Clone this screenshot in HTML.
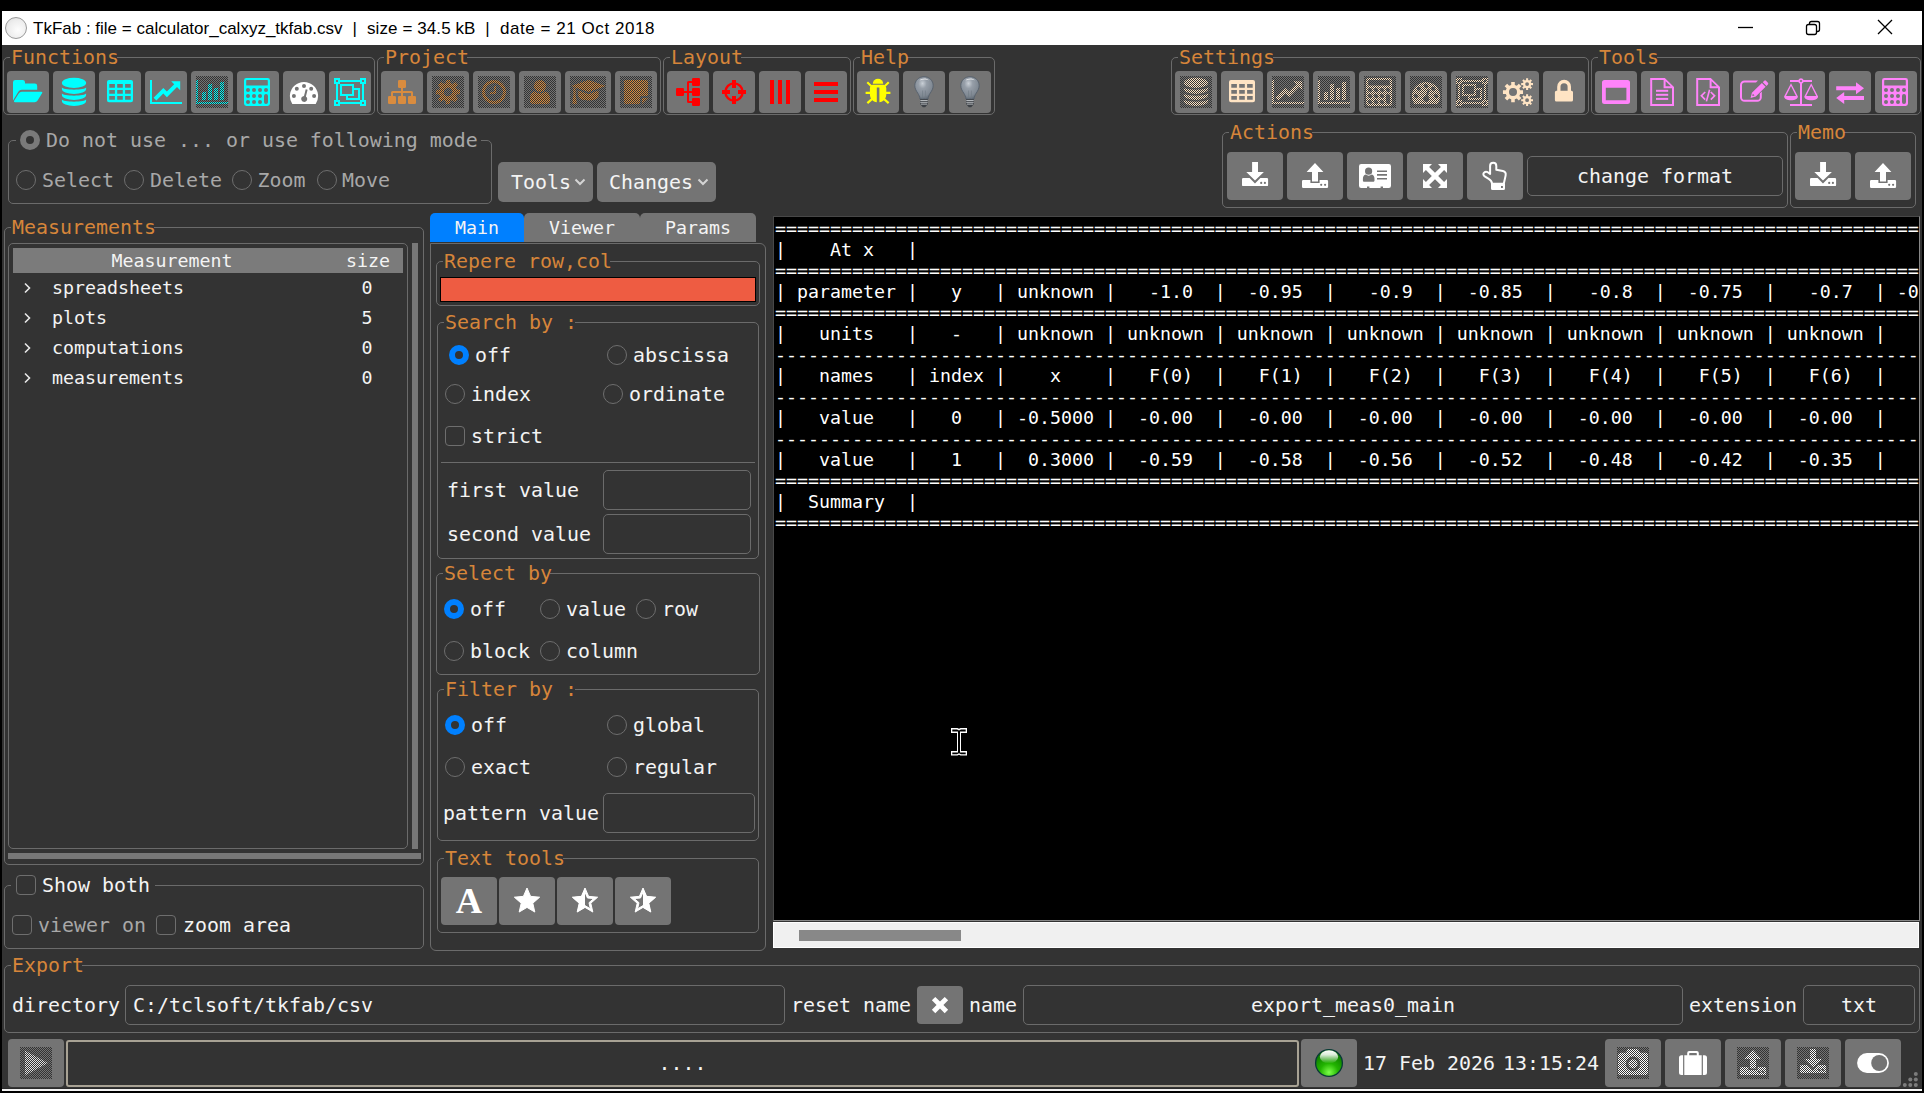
<!DOCTYPE html>
<html><head><meta charset="utf-8"><title>TkFab</title>
<style>
*{box-sizing:content-box;margin:0;padding:0}
html,body{width:1924px;height:1093px;overflow:hidden;background:#000}
body{position:relative;font-family:"DejaVu Sans Mono","Liberation Mono",monospace;color:#f4f4f4}
#win{position:absolute;left:2px;top:45px;width:1920px;height:1043px;background:#333333;border-bottom:1px solid #2a2a2a}
#wl{position:absolute;left:2px;top:1089px;width:1920px;height:2px;background:#f4f4f4}
#tb{position:absolute;left:2px;top:11px;width:1920px;height:34px;background:#fff}
#ticon{position:absolute;left:3px;top:6px;width:20px;height:20px;border-radius:50%;border:1px solid #9a9a9a;background:radial-gradient(circle at 60% 60%,#fdfdfd 0%,#ececec 60%,#d8d8d8 100%)}
.tt{position:absolute;top:0;height:34px;line-height:35px;font-family:"Liberation Sans","DejaVu Sans",sans-serif;font-size:17px;color:#000;white-space:pre}
#wctl{position:absolute;left:1719px;top:-1px}
.fr{position:absolute;border:1px solid #6b6b6b}
.fl{position:absolute;height:22px;line-height:24px;background:#333333;color:#d6853a;font-size:19.93px;white-space:pre;padding-left:1px}
.cover{position:absolute;background:#333333}
.bt{position:absolute;background:#747474;display:flex;align-items:center;justify-content:center}
.bt svg{display:block}
.mb span{position:absolute;top:0;height:40px;line-height:42px;font-size:19.93px}
.mb svg{position:absolute}
.mb{border-radius:5px}
.tx{position:absolute;height:30px;line-height:30px;white-space:pre}
.t20{font-size:19.93px}
.t18{font-size:18.27px}
.rd{position:absolute;width:18px;height:18px;border:1px solid #6e6e6e;border-radius:50%;background:#333333}
.rd.on{width:8px;height:8px;border:6px solid #0080ff;background:#333333}
.rd.ond{width:8px;height:8px;border:6px solid #7a7a7a;background:#333333}
.ck{position:absolute;width:18px;height:18px;border:1px solid #6e6e6e;border-radius:4px;background:#333333}
.en{position:absolute;border:1px solid #6b6b6b;border-radius:5px;font-size:19.93px;white-space:pre;color:#f4f4f4}
.en.pl{padding-left:7px}
.sep{position:absolute;height:1px;background:#6b6b6b}
.sb{position:absolute;background:#777}
.abs{position:absolute}
#thead{position:absolute;background:#7b7b7b}
.tab{position:absolute;background:#747474;border-radius:5px 5px 0 0;text-align:center;line-height:30px;font-size:18.27px;color:#f4f4f4}
.tab.on{background:#0080ff}
#red{position:absolute;background:#ee5c42;border:1px solid #000}
#ta{position:absolute;left:773px;top:216px;width:1145px;height:703px;background:#000;border:1px solid #484848;border-right-color:#888;border-bottom-color:#888;overflow:hidden;box-sizing:content-box}
#ta pre{position:absolute;left:1px;top:0.5px;font-family:inherit;font-size:18.27px;line-height:21px;color:#fff;margin:0}
#hs{position:absolute;left:773px;top:922px;width:1144px;height:24px;background:#f0f0f0;border:1px solid #fff}
#hth{position:absolute;left:25px;top:7px;width:162px;height:11px;background:#888}
#st{position:absolute;border:2px solid #a8a294;border-radius:3px;text-align:center;line-height:43px;font-size:19.93px}
</style></head>
<body>
<svg width="0" height="0" style="position:absolute"><defs><pattern id="stp" width="2" height="2" patternUnits="userSpaceOnUse"><rect x="0" y="0" width="1" height="1" fill="#333333"/><rect x="1" y="1" width="1" height="1" fill="#333333"/></pattern></defs></svg>
<div id="win"></div><div id="wl"></div>
<div id="tb"><div id="ticon"></div><div class="tt" style="left:31px">TkFab : file = calculator_calxyz_tkfab.csv</div><div class="tt" style="left:350.500px">|</div><div class="tt" style="left:365px;letter-spacing:0.09px">size = 34.5 kB</div><div class="tt" style="left:483.300px">|</div><div class="tt" style="left:498px;letter-spacing:0.55px">date = 21 Oct 2018</div><svg id="wctl" width="190" height="34" viewBox="0 0 190 34" fill="none" stroke="#000" stroke-width="1.3"><path d="M17 17.5h15"/><rect x="85.5" y="14.5" width="10" height="10" rx="2"/><path d="M88.5 14.5v-1a2 2 0 0 1 2-2h6a2 2 0 0 1 2 2v6a2 2 0 0 1-2 2h-1"/><path d="M157 10l14 14M171 10l-14 14"/></svg></div>
<div class="fr " style="left:3px;top:57px;width:370px;height:56px;border-radius:5px"></div>
<div class="fl" style="left:10px;top:46px;width:106px">Functions</div>
<div class="bt" style="left:7px;top:71px;width:42px;height:42px;border-radius:4px"><svg width="32" height="32" viewBox="0 0 32 32" fill="#00ffff" stroke="none" style="color:#00ffff"><path d="M1 6.3a2.4 2.4 0 0 1 2.4-2.4h7.2a2.4 2.4 0 0 1 2.4 2.4v1.3h9.8a2.4 2.4 0 0 1 2.4 2.4v3.7H9.6a3.6 3.6 0 0 0-3.1 1.8L1 24.5z"/><path d="M9.8 15.7h19.6a.9.9 0 0 1 .8 1.4l-4.6 7.4a3.6 3.6 0 0 1-3 1.7H2.9a.9.9 0 0 1-.8-1.4l4.6-7.4a3.6 3.6 0 0 1 3.1-1.7z"/></svg></div>
<div class="bt" style="left:53px;top:71px;width:42px;height:42px;border-radius:4px"><svg width="32" height="32" viewBox="0 0 32 32" fill="#00ffff" stroke="none" style="color:#00ffff"><ellipse cx="16" cy="6.9" rx="12.1" ry="5.1"/><path d="M3.900 11.300C3.900 14.500 28.100 14.500 28.100 11.300V13A12.100 5.100 0 0 1 3.900 13z"/><path d="M3.900 17.300C3.900 20.500 28.100 20.500 28.100 17.300V19A12.100 5.100 0 0 1 3.900 19z"/><path d="M3.900 23.300C3.900 26.500 28.100 26.500 28.100 23.300V25A12.100 5.100 0 0 1 3.900 25z"/></svg></div>
<div class="bt" style="left:99px;top:71px;width:42px;height:42px;border-radius:4px"><svg width="32" height="32" viewBox="0 0 32 32" fill="#00ffff" stroke="none" style="color:#00ffff"><path fill-rule="evenodd" d="M5 4h22a2 2 0 0 1 2 2v18.200a2 2 0 0 1-2 2H5a2 2 0 0 1-2-2V6a2 2 0 0 1 2-2zM5.3 8.1h5.6v3.6h-5.600zM5.3 14.1h5.6v3.6h-5.600zM5.3 20.1h5.6v3.6h-5.600zM13.2 8.1h5.6v3.6h-5.600zM13.2 14.1h5.6v3.6h-5.600zM13.2 20.1h5.6v3.6h-5.600zM21.1 8.1h5.6v3.6h-5.600zM21.1 14.1h5.6v3.6h-5.600zM21.1 20.1h5.6v3.6h-5.600z"/></svg></div>
<div class="bt" style="left:145px;top:71px;width:42px;height:42px;border-radius:4px"><svg width="32" height="32" viewBox="0 0 32 32" fill="#00ffff" stroke="none" style="color:#00ffff"><path d="M0 4h2v22h30v2H0z"/><path d="M3.600 21.700L13.300 12l3.600 3.600 7.300-7.300-3-3h9v9l-3.200-3.200-10.100 10.100-3.600-3.600-6.900 6.900z"/></svg></div>
<div class="bt" style="left:191px;top:71px;width:42px;height:42px;border-radius:4px"><svg width="32" height="32" viewBox="0 0 32 32" fill="#00ffff" stroke="none" style="color:#00ffff"><path d="M0 4h2v22h30v2H0z"/><rect x="6" y="16" width="4" height="8"/><rect x="12" y="8" width="4" height="16"/><rect x="18" y="12" width="4" height="12"/><rect x="24" y="6" width="4" height="18"/><rect x="0" y="0" width="32" height="32" fill="url(#stp)" shape-rendering="crispEdges"/></svg></div>
<div class="bt" style="left:237px;top:71px;width:42px;height:42px;border-radius:4px"><svg width="32" height="32" viewBox="0 0 32 32" fill="#00ffff" stroke="none" style="color:#00ffff"><path fill-rule="evenodd" d="M4.400 2h21.200a2.400 2.400 0 0 1 2.400 2.400v23.200a2.400 2.400 0 0 1-2.400 2.400H4.400a2.400 2.400 0 0 1-2.400-2.400V4.400a2.400 2.400 0 0 1 2.400-2.400zM4.800 4.100h20.400a.6.6 0 0 1 .6.600v4.300a.6.6 0 0 1-.6.600H4.800a.6.6 0 0 1-.6-.6V4.700a.6.600 0 0 1 .6-.6zM8 14a2 2 0 1 0 -4 0a2 2 0 1 0 4 0zM8 20a2 2 0 1 0 -4 0a2 2 0 1 0 4 0zM8 26a2 2 0 1 0 -4 0a2 2 0 1 0 4 0zM14 14a2 2 0 1 0 -4 0a2 2 0 1 0 4 0zM14 20a2 2 0 1 0 -4 0a2 2 0 1 0 4 0zM14 26a2 2 0 1 0 -4 0a2 2 0 1 0 4 0zM20 14a2 2 0 1 0 -4 0a2 2 0 1 0 4 0zM20 20a2 2 0 1 0 -4 0a2 2 0 1 0 4 0zM20 26a2 2 0 1 0 -4 0a2 2 0 1 0 4 0zM26 14a2 2 0 1 0 -4 0a2 2 0 1 0 4 0zM24 18a2 2 0 0 1 2 2v6a2 2 0 0 1-4 0v-6a2 2 0 0 1 2-2z"/></svg></div>
<div class="bt" style="left:283px;top:71px;width:42px;height:42px;border-radius:4px"><svg width="32" height="32" viewBox="0 0 32 32" fill="#ffffff" stroke="none" style="color:#ffffff"><path fill-rule="evenodd" d="M4.300 28a14.100 14.100 0 1 1 23.400 0zM18 9.9a2 2 0 1 0 -4 0a2 2 0 1 0 4 0zM10.8 12.8a2 2 0 1 0 -4 0a2 2 0 1 0 4 0zM25.2 12.8a2 2 0 1 0 -4 0a2 2 0 1 0 4 0zM7.9 20.1a2 2 0 1 0 -4 0a2 2 0 1 0 4 0zM28.1 20.1a2 2 0 1 0 -4 0a2 2 0 1 0 4 0zM17.700 13.300l1.900.5-1.700 6.600a3 3 0 1 1-1.900-.5z"/></svg></div>
<div class="bt" style="left:329px;top:71px;width:42px;height:42px;border-radius:4px"><svg width="32" height="32" viewBox="0 0 32 32" fill="#00ffff" stroke="none" style="color:#00ffff"><path fill-rule="evenodd" d="M0 2h6v2h20v-2h6v6h-2v16h2v6h-6v-2H6v2H0v-6h2V8H0zM2 4v2h2V4zM28 4v2h2V4zM2 26v2h2v-2zM28 26v2h2v-2zM6 6v2H4v16h2v2h20v-2h2V8h-2V6zM6 8h14v4h6v12H12v-4H6zM8 10v8h10v-8zM20 14v6h-6v2h10v-8z"/></svg></div>
<div class="fr " style="left:377px;top:57px;width:282px;height:56px;border-radius:5px"></div>
<div class="fl" style="left:384px;top:46px;width:82px">Project</div>
<div class="bt" style="left:381px;top:71px;width:42px;height:42px;border-radius:4px"><svg width="32" height="32" viewBox="0 0 32 32" fill="#d98c3f" stroke="none" style="color:#d98c3f"><rect x="12" y="4" width="8" height="8" rx="1.200"/><rect x="2" y="20" width="8" height="8" rx="1.200"/><rect x="12" y="20" width="8" height="8" rx="1.200"/><rect x="22" y="20" width="8" height="8" rx="1.200"/><path d="M15 11h2v4h8.500a1.500 1.500 0 0 1 1.500 1.500V21h-2v-4h-8v4h-2v-4H7v4H5v-4.500A1.500 1.500 0 0 1 6.500 15H15z"/></svg></div>
<div class="bt" style="left:427px;top:71px;width:42px;height:42px;border-radius:4px"><svg width="32" height="32" viewBox="0 0 32 32" fill="#d98c3f" stroke="none" style="color:#d98c3f"><path fill-rule="evenodd" d="M24.93 13.78 L28.01 13.86 L28.01 18.14 L24.93 18.22 L23.88 20.75 L26.01 22.98 L22.98 26.01 L20.75 23.88 L18.22 24.93 L18.14 28.01 L13.86 28.01 L13.78 24.93 L11.25 23.88 L9.02 26.01 L5.99 22.98 L8.12 20.75 L7.07 18.22 L3.99 18.14 L3.99 13.86 L7.07 13.78 L8.12 11.25 L5.99 9.02 L9.02 5.99 L11.25 8.12 L13.78 7.07 L13.86 3.99 L18.14 3.99 L18.22 7.07 L20.75 8.12 L22.98 5.99 L26.01 9.02 L23.88 11.25Z M20.20 16.00 A4.2 4.2 0 1 0 11.80 16.00 A4.2 4.2 0 1 0 20.20 16.00Z"/><rect x="0" y="0" width="32" height="32" fill="url(#stp)" shape-rendering="crispEdges"/></svg></div>
<div class="bt" style="left:473px;top:71px;width:42px;height:42px;border-radius:4px"><svg width="32" height="32" viewBox="0 0 32 32" fill="#d98c3f" stroke="none" style="color:#d98c3f"><path fill-rule="evenodd" d="M16 4a12 12 0 1 1 0 24a12 12 0 1 1 0-24zM16 7a9 9 0 1 0 0 18a9 9 0 1 0 0-18z"/><path d="M16 10h2v8h-6v-2h4z"/><rect x="0" y="0" width="32" height="32" fill="url(#stp)" shape-rendering="crispEdges"/></svg></div>
<div class="bt" style="left:519px;top:71px;width:42px;height:42px;border-radius:4px"><svg width="32" height="32" viewBox="0 0 32 32" fill="#d98c3f" stroke="none" style="color:#d98c3f"><circle cx="16" cy="10" r="6.100"/><path d="M11 15.400c1.400 1.200 3.100 1.800 5 1.800s3.600-.600 5-1.800c3 .4 5 3 5 7.600v2c0 1.800-1.400 3-3.400 3H9.400C7.400 28 6 26.800 6 25v-2c0-4.600 2-7.200 5-7.600z"/><rect x="0" y="0" width="32" height="32" fill="url(#stp)" shape-rendering="crispEdges"/></svg></div>
<div class="bt" style="left:565px;top:71px;width:46px;height:42px;border-radius:4px"><svg width="36" height="32" viewBox="0 0 36 32" fill="#d98c3f" stroke="none" style="color:#d98c3f"><path d="M18.500 3.900L35.800 10 18.500 16.100 1 10z"/><path d="M8.300 14.400l10.200 3.600 10-3.600v5.800c0 2.400-4.400 4.200-10 4.200s-10.200-1.800-10.200-4.200z"/><path d="M3.400 11.200l2.200.8v6.500l1.200 8.500c0 .6-.6 1-1.400 1H3.700c-.8 0-1.400-.4-1.300-1l1-8.500z"/><rect x="0" y="0" width="36" height="32" fill="url(#stp)" shape-rendering="crispEdges"/></svg></div>
<div class="bt" style="left:615px;top:71px;width:42px;height:42px;border-radius:4px"><svg width="32" height="32" viewBox="0 0 32 32" fill="#d98c3f" stroke="none" style="color:#d98c3f"><path d="M5.500 4h21A1.500 1.500 0 0 1 28 5.500V20h-6.500A1.500 1.500 0 0 0 20 21.500V28H5.500A1.500 1.500 0 0 1 4 26.500v-21A1.500 1.500 0 0 1 5.500 4z"/><path d="M22 22h6l-6 6z"/><rect x="0" y="0" width="32" height="32" fill="url(#stp)" shape-rendering="crispEdges"/></svg></div>
<div class="fr " style="left:663px;top:57px;width:186px;height:56px;border-radius:5px"></div>
<div class="fl" style="left:670px;top:46px;width:70px">Layout</div>
<div class="bt" style="left:667px;top:71px;width:42px;height:42px;border-radius:4px"><svg width="32" height="32" viewBox="0 0 32 32" fill="#ff0000" stroke="none" style="color:#ff0000"><rect x="4" y="12" width="8" height="8" rx="1.200"/><rect x="20" y="2" width="8" height="8" rx="1.200"/><rect x="20" y="12" width="8" height="8" rx="1.200"/><rect x="20" y="22" width="8" height="8" rx="1.200"/><path d="M11 15h4V6.500A1.500 1.500 0 0 1 16.500 5H21v2h-4v8h4v2h-4v8h4v2h-4.500A1.500 1.500 0 0 1 15 25.500V17h-4z"/></svg></div>
<div class="bt" style="left:713px;top:71px;width:42px;height:42px;border-radius:4px"><svg width="32" height="32" viewBox="0 0 32 32" fill="#ff0000" stroke="none" style="color:#ff0000"><path fill-rule="evenodd" d="M16 6.200a9.800 9.800 0 1 1 0 19.600a9.800 9.800 0 1 1 0-19.600zM16 8.600a7.400 7.400 0 1 0 0 14.800a7.400 7.400 0 1 0 0-14.800z"/><rect x="14" y="4" width="4" height="8"/><rect x="14" y="20" width="4" height="8"/><rect x="4" y="14" width="8" height="4"/><rect x="20" y="14" width="8" height="4"/></svg></div>
<div class="bt" style="left:759px;top:71px;width:42px;height:42px;border-radius:4px"><svg width="32" height="32" viewBox="0 0 32 32" fill="#ff0000" stroke="none" style="color:#ff0000"><rect x="6" y="4" width="4" height="24"/><rect x="14" y="4" width="4" height="24"/><rect x="22" y="4" width="4" height="24"/></svg></div>
<div class="bt" style="left:805px;top:71px;width:42px;height:42px;border-radius:4px"><svg width="32" height="32" viewBox="0 0 32 32" fill="#ff0000" stroke="none" style="color:#ff0000"><rect x="4" y="6" width="24" height="4"/><rect x="4" y="14" width="24" height="4"/><rect x="4" y="22" width="24" height="4"/></svg></div>
<div class="fr " style="left:853px;top:57px;width:140px;height:56px;border-radius:5px"></div>
<div class="fl" style="left:860px;top:46px;width:46px">Help</div>
<div class="bt" style="left:857px;top:71px;width:42px;height:42px;border-radius:4px"><svg width="32" height="32" viewBox="0 0 32 32" fill="#ffff00" stroke="none" style="color:#ffff00"><path d="M10.800 7.700a5.200 4.900 0 0 1 10.400 0z"/><path d="M10.600 8.700h10.800c1.600.6 2.900 1.900 2.900 3.600v5.900c0 4.500-3 7.700-6.900 8.100V11.600h-2.600v14.700c-3.900-.4-6.900-3.600-6.900-8.100v-5.900c0-1.700 1.200-3 2.700-3.600z"/><path d="M9.300 11.600L4.500 6.900l1.500-1.500 4.800 4.800zM22.700 11.600l4.800-4.700-1.500-1.500-4.800 4.800zM8.700 15.700H3.600v2.400h5.100zM23.300 15.700h5.100v2.400h-5.100zM9.800 21.800l-5.200 4.500 1.500 1.600 5.300-4.600zM22.200 21.800l5.200 4.500-1.500 1.600-5.300-4.600z"/></svg></div>
<div class="bt" style="left:903px;top:71px;width:42px;height:42px;border-radius:4px"><svg width="32" height="32" viewBox="0 0 32 32" fill="#ffff00" stroke="none" style="color:#ffff00"><defs><radialGradient id="bg1" cx="0.42" cy="0.3" r="0.75"><stop offset="0" stop-color="#c9cfd6"/><stop offset="0.3" stop-color="#969ea8"/><stop offset="0.75" stop-color="#7f8892"/><stop offset="1" stop-color="#59636e"/></radialGradient></defs><path d="M16 .7c5.200 0 9.200 3.900 9.200 8.900 0 3.200-1.600 5.400-3 7.600-1 1.600-2 3.600-2.200 6h-8c-.2-2.400-1.200-4.400-2.200-6-1.400-2.200-3-4.400-3-7.600C6.800 4.600 10.800 .7 16 .7z" fill="url(#bg1)" stroke="#56606c" stroke-width=".9"/><path d="M11.500 4.500c2-2.200 6.500-2.800 9.500-.3-3-1-6.500-.8-9.500.3z" fill="#fff" opacity=".75"/><path d="M12.100 23.200h7.800v5l-1.700 1.700-1 1.300h-2.400l-1-1.300-1.700-1.700z" fill="#3c4046"/><path d="M12.300 24.500h7.400M12.300 26.300h7.400M12.800 28.100h6.400" stroke="#d0d4d8" stroke-width=".8" fill="none"/><path d="M14.600 22.500V14.500M17.400 22.500V14.500" stroke="#6f7883" stroke-width=".6" fill="none"/></svg></div>
<div class="bt" style="left:949px;top:71px;width:42px;height:42px;border-radius:4px"><svg width="32" height="32" viewBox="0 0 32 32" fill="#ffff00" stroke="none" style="color:#ffff00"><defs><radialGradient id="bg1" cx="0.42" cy="0.3" r="0.75"><stop offset="0" stop-color="#c9cfd6"/><stop offset="0.3" stop-color="#969ea8"/><stop offset="0.75" stop-color="#7f8892"/><stop offset="1" stop-color="#59636e"/></radialGradient></defs><path d="M16 .7c5.200 0 9.200 3.900 9.200 8.900 0 3.200-1.600 5.400-3 7.600-1 1.600-2 3.600-2.200 6h-8c-.2-2.400-1.200-4.400-2.200-6-1.400-2.200-3-4.400-3-7.600C6.800 4.600 10.800 .7 16 .7z" fill="url(#bg1)" stroke="#56606c" stroke-width=".9"/><path d="M11.500 4.500c2-2.200 6.500-2.800 9.500-.3-3-1-6.500-.8-9.500.3z" fill="#fff" opacity=".75"/><path d="M12.100 23.200h7.800v5l-1.700 1.700-1 1.300h-2.400l-1-1.300-1.700-1.700z" fill="#3c4046"/><path d="M12.300 24.500h7.400M12.300 26.300h7.400M12.800 28.100h6.400" stroke="#d0d4d8" stroke-width=".8" fill="none"/><path d="M14.600 22.500V14.500M17.400 22.500V14.500" stroke="#6f7883" stroke-width=".6" fill="none"/></svg></div>
<div class="fr " style="left:1171px;top:57px;width:416px;height:56px;border-radius:5px"></div>
<div class="fl" style="left:1178px;top:46px;width:94px">Settings</div>
<div class="bt" style="left:1175px;top:71px;width:42px;height:42px;border-radius:4px"><svg width="32" height="32" viewBox="0 0 32 32" fill="#ffe4c4" stroke="none" style="color:#ffe4c4"><ellipse cx="16" cy="6.9" rx="12.1" ry="5.1"/><path d="M3.900 11.300C3.900 14.500 28.100 14.500 28.100 11.300V13A12.100 5.100 0 0 1 3.900 13z"/><path d="M3.900 17.300C3.900 20.500 28.100 20.500 28.100 17.300V19A12.100 5.100 0 0 1 3.900 19z"/><path d="M3.900 23.300C3.900 26.500 28.100 26.500 28.100 23.300V25A12.100 5.100 0 0 1 3.900 25z"/><rect x="0" y="0" width="32" height="32" fill="url(#stp)" shape-rendering="crispEdges"/></svg></div>
<div class="bt" style="left:1221px;top:71px;width:42px;height:42px;border-radius:4px"><svg width="32" height="32" viewBox="0 0 32 32" fill="#ffe4c4" stroke="none" style="color:#ffe4c4"><path fill-rule="evenodd" d="M5 4h22a2 2 0 0 1 2 2v18.200a2 2 0 0 1-2 2H5a2 2 0 0 1-2-2V6a2 2 0 0 1 2-2zM5.3 8.1h5.6v3.6h-5.600zM5.3 14.1h5.6v3.6h-5.600zM5.3 20.1h5.6v3.6h-5.600zM13.2 8.1h5.6v3.6h-5.600zM13.2 14.1h5.6v3.6h-5.600zM13.2 20.1h5.6v3.6h-5.600zM21.1 8.1h5.6v3.6h-5.600zM21.1 14.1h5.6v3.6h-5.600zM21.1 20.1h5.6v3.6h-5.600z"/></svg></div>
<div class="bt" style="left:1267px;top:71px;width:42px;height:42px;border-radius:4px"><svg width="32" height="32" viewBox="0 0 32 32" fill="#ffe4c4" stroke="none" style="color:#ffe4c4"><path d="M0 4h2v22h30v2H0z"/><path d="M3.600 21.700L13.300 12l3.600 3.600 7.300-7.300-3-3h9v9l-3.200-3.200-10.100 10.100-3.600-3.600-6.900 6.900z"/><rect x="0" y="0" width="32" height="32" fill="url(#stp)" shape-rendering="crispEdges"/></svg></div>
<div class="bt" style="left:1313px;top:71px;width:42px;height:42px;border-radius:4px"><svg width="32" height="32" viewBox="0 0 32 32" fill="#ffe4c4" stroke="none" style="color:#ffe4c4"><path d="M0 4h2v22h30v2H0z"/><rect x="6" y="16" width="4" height="8"/><rect x="12" y="8" width="4" height="16"/><rect x="18" y="12" width="4" height="12"/><rect x="24" y="6" width="4" height="18"/><rect x="0" y="0" width="32" height="32" fill="url(#stp)" shape-rendering="crispEdges"/></svg></div>
<div class="bt" style="left:1359px;top:71px;width:42px;height:42px;border-radius:4px"><svg width="32" height="32" viewBox="0 0 32 32" fill="#ffe4c4" stroke="none" style="color:#ffe4c4"><path fill-rule="evenodd" d="M4.400 2h21.200a2.400 2.400 0 0 1 2.400 2.400v23.200a2.400 2.400 0 0 1-2.400 2.400H4.400a2.400 2.400 0 0 1-2.400-2.400V4.400a2.400 2.400 0 0 1 2.400-2.400zM4.800 4.100h20.400a.6.6 0 0 1 .6.600v4.300a.6.6 0 0 1-.6.600H4.800a.6.6 0 0 1-.6-.6V4.700a.6.600 0 0 1 .6-.6zM8 14a2 2 0 1 0 -4 0a2 2 0 1 0 4 0zM8 20a2 2 0 1 0 -4 0a2 2 0 1 0 4 0zM8 26a2 2 0 1 0 -4 0a2 2 0 1 0 4 0zM14 14a2 2 0 1 0 -4 0a2 2 0 1 0 4 0zM14 20a2 2 0 1 0 -4 0a2 2 0 1 0 4 0zM14 26a2 2 0 1 0 -4 0a2 2 0 1 0 4 0zM20 14a2 2 0 1 0 -4 0a2 2 0 1 0 4 0zM20 20a2 2 0 1 0 -4 0a2 2 0 1 0 4 0zM20 26a2 2 0 1 0 -4 0a2 2 0 1 0 4 0zM26 14a2 2 0 1 0 -4 0a2 2 0 1 0 4 0zM24 18a2 2 0 0 1 2 2v6a2 2 0 0 1-4 0v-6a2 2 0 0 1 2-2z"/><rect x="0" y="0" width="32" height="32" fill="url(#stp)" shape-rendering="crispEdges"/></svg></div>
<div class="bt" style="left:1405px;top:71px;width:42px;height:42px;border-radius:4px"><svg width="32" height="32" viewBox="0 0 32 32" fill="#ffe4c4" stroke="none" style="color:#ffe4c4"><path fill-rule="evenodd" d="M4.300 28a14.100 14.100 0 1 1 23.400 0zM18 9.9a2 2 0 1 0 -4 0a2 2 0 1 0 4 0zM10.8 12.8a2 2 0 1 0 -4 0a2 2 0 1 0 4 0zM25.2 12.8a2 2 0 1 0 -4 0a2 2 0 1 0 4 0zM7.9 20.1a2 2 0 1 0 -4 0a2 2 0 1 0 4 0zM28.1 20.1a2 2 0 1 0 -4 0a2 2 0 1 0 4 0zM17.700 13.300l1.900.5-1.700 6.600a3 3 0 1 1-1.900-.5z"/><rect x="0" y="0" width="32" height="32" fill="url(#stp)" shape-rendering="crispEdges"/></svg></div>
<div class="bt" style="left:1451px;top:71px;width:42px;height:42px;border-radius:4px"><svg width="32" height="32" viewBox="0 0 32 32" fill="#ffe4c4" stroke="none" style="color:#ffe4c4"><path fill-rule="evenodd" d="M0 2h6v2h20v-2h6v6h-2v16h2v6h-6v-2H6v2H0v-6h2V8H0zM2 4v2h2V4zM28 4v2h2V4zM2 26v2h2v-2zM28 26v2h2v-2zM6 6v2H4v16h2v2h20v-2h2V8h-2V6zM6 8h14v4h6v12H12v-4H6zM8 10v8h10v-8zM20 14v6h-6v2h10v-8z"/><rect x="0" y="0" width="32" height="32" fill="url(#stp)" shape-rendering="crispEdges"/></svg></div>
<div class="bt" style="left:1497px;top:71px;width:42px;height:42px;border-radius:4px"><svg width="32" height="32" viewBox="0 0 32 32" fill="#ffe4c4" stroke="none" style="color:#ffe4c4"><path fill-rule="evenodd" d="M18.18 14.32 L21.04 14.31 L21.04 17.89 L18.18 17.88 L17.34 19.92 L19.37 21.93 L16.83 24.47 L14.82 22.44 L12.78 23.28 L12.79 26.14 L9.21 26.14 L9.22 23.28 L7.18 22.44 L5.17 24.47 L2.63 21.93 L4.66 19.92 L3.82 17.88 L0.96 17.89 L0.96 14.31 L3.82 14.32 L4.66 12.28 L2.63 10.27 L5.17 7.73 L7.18 9.76 L9.22 8.92 L9.21 6.06 L12.79 6.06 L12.78 8.92 L14.82 9.76 L16.83 7.73 L19.37 10.27 L17.34 12.28Z M15.00 16.10 A4 4 0 1 0 7.00 16.10 A4 4 0 1 0 15.00 16.10Z"/><path fill-rule="evenodd" d="M29.18 7.09 L31.01 7.05 L31.01 9.15 L29.18 9.11 L28.70 10.27 L30.02 11.53 L28.53 13.02 L27.27 11.70 L26.11 12.18 L26.15 14.01 L24.05 14.01 L24.09 12.18 L22.93 11.70 L21.67 13.02 L20.18 11.53 L21.50 10.27 L21.02 9.11 L19.19 9.15 L19.19 7.05 L21.02 7.09 L21.50 5.93 L20.18 4.67 L21.67 3.18 L22.93 4.50 L24.09 4.02 L24.05 2.19 L26.15 2.19 L26.11 4.02 L27.27 4.50 L28.53 3.18 L30.02 4.67 L28.70 5.93Z M27.00 8.10 A1.9 1.9 0 1 0 23.20 8.10 A1.9 1.9 0 1 0 27.00 8.10Z"/><path fill-rule="evenodd" d="M29.18 23.19 L31.01 23.15 L31.01 25.25 L29.18 25.21 L28.70 26.37 L30.02 27.63 L28.53 29.12 L27.27 27.80 L26.11 28.28 L26.15 30.11 L24.05 30.11 L24.09 28.28 L22.93 27.80 L21.67 29.12 L20.18 27.63 L21.50 26.37 L21.02 25.21 L19.19 25.25 L19.19 23.15 L21.02 23.19 L21.50 22.03 L20.18 20.77 L21.67 19.28 L22.93 20.60 L24.09 20.12 L24.05 18.29 L26.15 18.29 L26.11 20.12 L27.27 20.60 L28.53 19.28 L30.02 20.77 L28.70 22.03Z M27.00 24.20 A1.9 1.9 0 1 0 23.20 24.20 A1.9 1.9 0 1 0 27.00 24.20Z"/></svg></div>
<div class="bt" style="left:1543px;top:71px;width:42px;height:42px;border-radius:4px"><svg width="32" height="32" viewBox="0 0 32 32" fill="#ffe4c4" stroke="none" style="color:#ffe4c4"><path fill-rule="evenodd" d="M9.200 14.800V10.700a6.900 6.900 0 0 1 13.800 0v4.100h.5a1.500 1.500 0 0 1 1.500 1.500V24a1.500 1.500 0 0 1-1.500 1.500H8.400A1.500 1.500 0 0 1 6.900 24v-7.700a1.500 1.500 0 0 1 1.500-1.500zM12.500 14.800h7.100v-4.100a3.550 3.550 0 0 0-7.100 0z"/></svg></div>
<div class="fr " style="left:1591px;top:57px;width:328px;height:56px;border-radius:5px"></div>
<div class="fl" style="left:1598px;top:46px;width:58px">Tools</div>
<div class="bt" style="left:1595px;top:71px;width:42px;height:42px;border-radius:4px"><svg width="32" height="32" viewBox="0 0 32 32" fill="#ff83fa" stroke="none" style="color:#ff83fa"><path fill-rule="evenodd" d="M4.500 4h23A2.500 2.500 0 0 1 30 6.500v19a2.500 2.500 0 0 1-2.500 2.500h-23A2.500 2.500 0 0 1 2 25.500v-19A2.500 2.500 0 0 1 4.500 4zM5.800 11.800v12.400h20.600V11.800z"/></svg></div>
<div class="bt" style="left:1641px;top:71px;width:42px;height:42px;border-radius:4px"><svg width="32" height="32" viewBox="0 0 32 32" fill="#ff83fa" stroke="none" style="color:#ff83fa"><path fill-rule="evenodd" d="M4.200 2h14.600L28 11v19H4.200zM6.200 4v24H26V12.200h-8.400V4zM19.600 5.200v5h5.200z"/><rect x="10" y="13.800" width="12.200" height="2"/><rect x="10" y="17.800" width="12.200" height="2"/><rect x="10" y="21.900" width="12.200" height="2"/></svg></div>
<div class="bt" style="left:1687px;top:71px;width:42px;height:42px;border-radius:4px"><svg width="32" height="32" viewBox="0 0 32 32" fill="#ff83fa" stroke="none" style="color:#ff83fa"><path fill-rule="evenodd" d="M4.200 2h14.600L28 11v19H4.200zM6.200 4v24H26V12.200h-8.400V4zM19.600 5.200v5h5.200z"/><path d="M12.600 15.400l1.200 1.200-3.200 3.200 3.200 3.200-1.200 1.200-4.400-4.400zM19.400 15.400l-1.200 1.200 3.200 3.200-3.200 3.200 1.200 1.200 4.400-4.400zM16.800 13.600l1.600.4-3.200 11.600-1.600-.4z"/></svg></div>
<div class="bt" style="left:1733px;top:71px;width:42px;height:42px;border-radius:4px"><svg width="32" height="32" viewBox="0 0 32 32" fill="#ff83fa" stroke="none" style="color:#ff83fa"><path d="M6.600 4.400H20l-2 2H6.600A2.600 2.600 0 0 0 4 9v12.200a2.600 2.600 0 0 0 2.600 2.600h12.600a2.600 2.600 0 0 0 2.600-2.600v-3.600l2-2v5.600a4.600 4.600 0 0 1-4.600 4.600H6.600A4.600 4.600 0 0 1 2 21.200V9a4.600 4.600 0 0 1 4.600-4.600z"/><path d="M24.800 6.200l1.400-1.400a1.300 1.300 0 0 1 1.800 0l1.900 1.900a1.300 1.300 0 0 1 0 1.800l-1.400 1.400zM23.900 7.100l3.700 3.700-9.800 9.800-5.200 1.300 1.300-5.200zM14.800 17.800l-.5 2.200 2.200-.5z" fill-rule="evenodd"/></svg></div>
<div class="bt" style="left:1779px;top:71px;width:46px;height:42px;border-radius:4px"><svg width="36" height="32" viewBox="0 0 36 32" fill="#ff83fa" stroke="none" style="color:#ff83fa"><path fill-rule="evenodd" d="M17 2.200a2.800 2.800 0 0 1 2.600 1.800H28v2h-8.400a2.800 2.800 0 0 1-1.600 1.600V28h10v2H6v-2h10V7.600A2.800 2.800 0 0 1 14.400 6H6V4h8.400A2.800 2.800 0 0 1 17 2.200zM17 4a1 1 0 1 0 0 2a1 1 0 1 0 0-2z"/><path fill-rule="evenodd" d="M7 7.200l6.900 13.200c0 2.200-3 3.800-6.900 3.800S.1 22.600.1 20.400zM7 10L2 20h10zM27.200 7.200l6.900 13.200c0 2.200-3 3.800-6.900 3.800s-6.900-1.600-6.900-3.800zM27.200 10l-5 10h10z"/></svg></div>
<div class="bt" style="left:1829px;top:71px;width:42px;height:42px;border-radius:4px"><svg width="32" height="32" viewBox="0 0 32 32" fill="#ff83fa" stroke="none" style="color:#ff83fa"><path d="M2.200 10.300H22V6.200l8 6-8 6v-4H2.200zM30 20.100H10.200V16l-8 6 8 6v-4H30z"/></svg></div>
<div class="bt" style="left:1875px;top:71px;width:42px;height:42px;border-radius:4px"><svg width="32" height="32" viewBox="0 0 32 32" fill="#ff83fa" stroke="none" style="color:#ff83fa"><path fill-rule="evenodd" d="M4.400 2h21.200a2.400 2.400 0 0 1 2.400 2.400v23.200a2.400 2.400 0 0 1-2.400 2.400H4.400a2.400 2.400 0 0 1-2.400-2.400V4.400a2.400 2.400 0 0 1 2.400-2.400zM4.800 4.100h20.400a.6.6 0 0 1 .6.600v4.300a.6.6 0 0 1-.6.600H4.800a.6.6 0 0 1-.6-.6V4.700a.6.600 0 0 1 .6-.6zM8 14a2 2 0 1 0 -4 0a2 2 0 1 0 4 0zM8 20a2 2 0 1 0 -4 0a2 2 0 1 0 4 0zM8 26a2 2 0 1 0 -4 0a2 2 0 1 0 4 0zM14 14a2 2 0 1 0 -4 0a2 2 0 1 0 4 0zM14 20a2 2 0 1 0 -4 0a2 2 0 1 0 4 0zM14 26a2 2 0 1 0 -4 0a2 2 0 1 0 4 0zM20 14a2 2 0 1 0 -4 0a2 2 0 1 0 4 0zM20 20a2 2 0 1 0 -4 0a2 2 0 1 0 4 0zM20 26a2 2 0 1 0 -4 0a2 2 0 1 0 4 0zM26 14a2 2 0 1 0 -4 0a2 2 0 1 0 4 0zM24 18a2 2 0 0 1 2 2v6a2 2 0 0 1-4 0v-6a2 2 0 0 1 2-2z"/></svg></div>
<div class="fr " style="left:8px;top:140px;width:482px;height:62px;border-radius:5px"></div>
<div class="cover" style="left:16px;top:130px;width:465px;height:20px"></div>
<div class="rd ond" style="left:20px;top:130px"></div>
<div class="tx t20" style="left:46px;top:126px;color:#a8a8a8;">Do not use ... or use following mode</div>
<div class="rd" style="left:16px;top:170px"></div>
<div class="tx t20" style="left:42px;top:166px;color:#a8a8a8;">Select</div>
<div class="rd" style="left:124px;top:170px"></div>
<div class="tx t20" style="left:150px;top:166px;color:#a8a8a8;">Delete</div>
<div class="rd" style="left:232px;top:170px"></div>
<div class="tx t20" style="left:257.5px;top:166px;color:#a8a8a8;">Zoom</div>
<div class="rd" style="left:317px;top:170px"></div>
<div class="tx t20" style="left:342px;top:166px;color:#a8a8a8;">Move</div>
<div class="bt mb" style="left:498px;top:162px;width:95px;height:40px"><span style="left:13px">Tools</span><svg style="left:76px;top:15px" width="12" height="10" viewBox="0 0 12 10" fill="none" stroke="#d4d4d4" stroke-width="2"><path d="M1.500 2.500l4.500 4.500l4.500-4.500"/></svg></div>
<div class="bt mb" style="left:597px;top:162px;width:119px;height:40px"><span style="left:12px">Changes</span><svg style="left:100px;top:15px" width="12" height="10" viewBox="0 0 12 10" fill="none" stroke="#d4d4d4" stroke-width="2"><path d="M1.500 2.500l4.500 4.500l4.500-4.500"/></svg></div>
<div class="fr " style="left:1222px;top:132px;width:564px;height:74px;border-radius:5px"></div>
<div class="fl" style="left:1229px;top:121px;width:82px">Actions</div>
<div class="bt" style="left:1227px;top:152px;width:56px;height:48px;border-radius:4px"><svg width="32" height="32" viewBox="0 0 32 32" fill="#ffffff" stroke="none" style="color:#ffffff"><path d="M13.100 2.100h5.900V12h5.900L16 20.600 7.300 12h5.800z"/><path fill-rule="evenodd" d="M4.200 18.100h6.400l5.400 5.300 5.400-5.300h6.500a1.200 1.200 0 0 1 1.200 1.200v5.600a1.200 1.200 0 0 1-1.200 1.200H4.200A1.200 1.200 0 0 1 3 24.900v-5.600a1.200 1.200 0 0 1 1.200-1.200zM22.200 21.800a1.100 1.100 0 1 0 0 2.200a1.100 1.100 0 1 0 0-2.200zM25.900 21.800a1.100 1.100 0 1 0 0 2.200a1.100 1.100 0 1 0 0-2.200z"/></svg></div>
<div class="bt" style="left:1287px;top:152px;width:56px;height:48px;border-radius:4px"><svg width="32" height="32" viewBox="0 0 32 32" fill="#ffffff" stroke="none" style="color:#ffffff"><path d="M16 2.900L24.400 12H19v9.400h-6V12H7.600z"/><path fill-rule="evenodd" d="M4.200 20h7.200v3h9.200v-3h7.300a1.200 1.200 0 0 1 1.200 1.200v5.600a1.200 1.200 0 0 1-1.200 1.200H4.200A1.200 1.200 0 0 1 3 26.800v-5.600A1.200 1.200 0 0 1 4.200 20zM22.200 23.700a1.100 1.100 0 1 0 0 2.200a1.100 1.100 0 1 0 0-2.200zM26.100 23.700a1.100 1.100 0 1 0 0 2.200a1.100 1.100 0 1 0 0-2.200z"/></svg></div>
<div class="bt" style="left:1347px;top:152px;width:56px;height:48px;border-radius:4px"><svg width="32" height="32" viewBox="0 0 32 32" fill="#ffffff" stroke="none" style="color:#ffffff"><path fill-rule="evenodd" d="M2.200 4h27.600A2.200 2.200 0 0 1 32 6.200v19.600a2.200 2.200 0 0 1-2.200 2.200H24v-1.600h-2.400V28H10.400v-1.600H8V28H2.200A2.200 2.200 0 0 1 0 25.800V6.200A2.200 2.200 0 0 1 2.200 4zM9.600 7.600a3.600 3.600 0 1 0 0 7.200a3.600 3.600 0 1 0 0-7.200zM6.600 14.600C4.900 15 3.900 16.600 3.900 19v1.400c0 .8.600 1.300 1.400 1.300h8.800c.8 0 1.400-.5 1.400-1.300V19c0-2.400-1-4-2.700-4.400-.9.700-2 1.100-3.100 1.100s-2.200-.4-3.100-1.100zM18 10.400V12h10v-1.600zM18 14v1.700h10V14zM18 17.900v1.600h10v-1.600z"/></svg></div>
<div class="bt" style="left:1407px;top:152px;width:56px;height:48px;border-radius:4px"><svg width="32" height="32" viewBox="0 0 32 32" fill="#ffffff" stroke="none" style="color:#ffffff"><path d="M4 4h9l-2.900 2.900L16 12.800l5.900-5.900L19 4h9v9l-2.900-2.900L19.200 16l5.900 5.900L28 19v9h-9l2.900-2.900L16 19.200l-5.900 5.900L13 28H4v-9l2.900 2.900L12.800 16 6.900 10.100 4 13z"/></svg></div>
<div class="bt" style="left:1467px;top:152px;width:56px;height:48px;border-radius:4px"><svg width="32" height="32" viewBox="0 0 32 32" fill="#ffffff" stroke="none" style="color:#ffffff"><path fill="none" stroke="currentColor" stroke-width="2" stroke-linejoin="round" d="M11.100 13.900V5.900a3.100 3.100 0 0 1 6.200 0v3.800l6.600 1.300c2.400.5 3.200 2 2.700 4.600l-1.800 8.200H13.100c-.2-2.400-1.200-3.700-3.400-5l-4-2.400c-1.600-1-1.800-2.800-.5-3.900 1-.9 2.300-.9 3.500-.3z"/><path fill-rule="evenodd" d="M12 23.400h14v5.100a1.500 1.500 0 0 1-1.500 1.500h-11a1.500 1.500 0 0 1-1.500-1.500zM22 26v1.900h1.900V26z"/></svg></div>
<div class="en " style="left:1527px;top:156px;width:254px;height:38px;line-height:40px;text-align:center">change format</div>
<div class="fr " style="left:1790px;top:132px;width:124px;height:74px;border-radius:5px"></div>
<div class="fl" style="left:1797px;top:121px;width:46px">Memo</div>
<div class="bt" style="left:1795px;top:152px;width:56px;height:48px;border-radius:4px"><svg width="32" height="32" viewBox="0 0 32 32" fill="#ffffff" stroke="none" style="color:#ffffff"><path d="M13.100 2.100h5.900V12h5.900L16 20.600 7.300 12h5.800z"/><path fill-rule="evenodd" d="M4.200 18.100h6.400l5.400 5.300 5.400-5.300h6.500a1.200 1.200 0 0 1 1.200 1.200v5.600a1.200 1.200 0 0 1-1.200 1.200H4.200A1.200 1.200 0 0 1 3 24.900v-5.600a1.200 1.200 0 0 1 1.200-1.200zM22.200 21.800a1.100 1.100 0 1 0 0 2.200a1.100 1.100 0 1 0 0-2.200zM25.900 21.800a1.100 1.100 0 1 0 0 2.200a1.100 1.100 0 1 0 0-2.200z"/></svg></div>
<div class="bt" style="left:1855px;top:152px;width:56px;height:48px;border-radius:4px"><svg width="32" height="32" viewBox="0 0 32 32" fill="#ffffff" stroke="none" style="color:#ffffff"><path d="M16 2.900L24.400 12H19v9.400h-6V12H7.600z"/><path fill-rule="evenodd" d="M4.200 20h7.200v3h9.200v-3h7.300a1.200 1.200 0 0 1 1.200 1.200v5.600a1.200 1.200 0 0 1-1.200 1.200H4.200A1.200 1.200 0 0 1 3 26.800v-5.600A1.200 1.200 0 0 1 4.200 20zM22.200 23.700a1.100 1.100 0 1 0 0 2.200a1.100 1.100 0 1 0 0-2.200zM26.100 23.700a1.100 1.100 0 1 0 0 2.200a1.100 1.100 0 1 0 0-2.200z"/></svg></div>
<div class="fr " style="left:4px;top:227px;width:418px;height:636px;border-radius:5px"></div>
<div class="fl" style="left:11px;top:216px;width:142px">Measurements</div>
<div class="fr " style="left:8px;top:243px;width:398px;height:604px;border-radius:5px"></div>
<div id="thead" style="left:13px;top:248px;width:390px;height:25px"></div>
<div class="tx t18" style="left:13px;top:245.5px;width:318px;text-align:center;">Measurement</div>
<div class="tx t18" style="left:332px;top:245.5px;width:72px;text-align:center;">size</div>
<svg class="abs" style="left:22px;top:281px" width="12" height="14" viewBox="0 0 12 14" fill="none" stroke="#e8e8e8" stroke-width="1.6"><path d="M3 2.5l4.5 4.5l-4.5 4.5"/></svg>
<div class="tx t18" style="left:52px;top:273px;">spreadsheets</div>
<div class="tx t18" style="left:331px;top:273px;width:72px;text-align:center;">0</div>
<svg class="abs" style="left:22px;top:311px" width="12" height="14" viewBox="0 0 12 14" fill="none" stroke="#e8e8e8" stroke-width="1.6"><path d="M3 2.5l4.5 4.5l-4.5 4.5"/></svg>
<div class="tx t18" style="left:52px;top:303px;">plots</div>
<div class="tx t18" style="left:331px;top:303px;width:72px;text-align:center;">5</div>
<svg class="abs" style="left:22px;top:341px" width="12" height="14" viewBox="0 0 12 14" fill="none" stroke="#e8e8e8" stroke-width="1.6"><path d="M3 2.5l4.5 4.5l-4.5 4.5"/></svg>
<div class="tx t18" style="left:52px;top:333px;">computations</div>
<div class="tx t18" style="left:331px;top:333px;width:72px;text-align:center;">0</div>
<svg class="abs" style="left:22px;top:371px" width="12" height="14" viewBox="0 0 12 14" fill="none" stroke="#e8e8e8" stroke-width="1.6"><path d="M3 2.5l4.5 4.5l-4.5 4.5"/></svg>
<div class="tx t18" style="left:52px;top:363px;">measurements</div>
<div class="tx t18" style="left:331px;top:363px;width:72px;text-align:center;">0</div>
<div class="sb" style="left:412px;top:243px;width:6px;height:606px"></div>
<div class="sb" style="left:8px;top:853px;width:413px;height:6px"></div>
<div class="fr " style="left:4px;top:885px;width:418px;height:62px;border-radius:5px"></div>
<div class="cover" style="left:11px;top:875px;width:144px;height:20px"></div>
<div class="ck" style="left:16px;top:875px"></div>
<div class="tx t20" style="left:42px;top:871px;">Show both</div>
<div class="ck" style="left:12px;top:915px"></div>
<div class="tx t20" style="left:38px;top:911px;color:#a8a8a8;">viewer on</div>
<div class="ck" style="left:156px;top:915px"></div>
<div class="tx t20" style="left:183px;top:911px;">zoom area</div>
<div class="tab on" style="left:430px;top:213px;width:94px;height:29px">Main</div>
<div class="tab" style="left:524px;top:213px;width:116px;height:29px">Viewer</div>
<div class="tab" style="left:640px;top:213px;width:116px;height:29px">Params</div>
<div class="fr" style="left:430px;top:243px;width:334px;height:706px;border-radius:0 6px 6px 6px"></div>
<div class="fr " style="left:436px;top:261px;width:322px;height:43px;border-radius:5px"></div>
<div class="fl" style="left:443px;top:250px;width:166px">Repere row,col</div>
<div id="red" style="left:440px;top:277px;width:314px;height:23px"></div>
<div class="fr " style="left:437px;top:322px;width:320px;height:235px;border-radius:5px"></div>
<div class="fl" style="left:444px;top:311px;width:130px">Search by :</div>
<div class="rd on" style="left:449px;top:345px"></div>
<div class="tx t20" style="left:475px;top:341px;">off</div>
<div class="rd" style="left:607px;top:345px"></div>
<div class="tx t20" style="left:633px;top:341px;">abscissa</div>
<div class="rd" style="left:445px;top:384px"></div>
<div class="tx t20" style="left:471px;top:380px;">index</div>
<div class="rd" style="left:603px;top:384px"></div>
<div class="tx t20" style="left:629px;top:380px;">ordinate</div>
<div class="ck" style="left:445px;top:426px"></div>
<div class="tx t20" style="left:471px;top:422px;">strict</div>
<div class="sep" style="left:441px;top:462px;width:314px"></div>
<div class="tx t20" style="left:447px;top:476px;">first value</div>
<div class="en " style="left:603px;top:470px;width:146px;height:38px;line-height:40px;text-align:left"></div>
<div class="tx t20" style="left:447px;top:520px;">second value</div>
<div class="en " style="left:603px;top:514px;width:146px;height:38px;line-height:40px;text-align:left"></div>
<div class="fr " style="left:436px;top:573px;width:322px;height:100px;border-radius:5px"></div>
<div class="fl" style="left:443px;top:562px;width:106px">Select by</div>
<div class="rd on" style="left:444px;top:599px"></div>
<div class="tx t20" style="left:470px;top:595px;">off</div>
<div class="rd" style="left:540px;top:599px"></div>
<div class="tx t20" style="left:566px;top:595px;">value</div>
<div class="rd" style="left:636px;top:599px"></div>
<div class="tx t20" style="left:662px;top:595px;">row</div>
<div class="rd" style="left:444px;top:641px"></div>
<div class="tx t20" style="left:470px;top:637px;">block</div>
<div class="rd" style="left:540px;top:641px"></div>
<div class="tx t20" style="left:566px;top:637px;">column</div>
<div class="fr " style="left:437px;top:689px;width:320px;height:150px;border-radius:5px"></div>
<div class="fl" style="left:444px;top:678px;width:130px">Filter by :</div>
<div class="rd on" style="left:445px;top:715px"></div>
<div class="tx t20" style="left:471px;top:711px;">off</div>
<div class="rd" style="left:607px;top:715px"></div>
<div class="tx t20" style="left:633px;top:711px;">global</div>
<div class="rd" style="left:445px;top:757px"></div>
<div class="tx t20" style="left:471px;top:753px;">exact</div>
<div class="rd" style="left:607px;top:757px"></div>
<div class="tx t20" style="left:633px;top:753px;">regular</div>
<div class="tx t20" style="left:443px;top:799px;">pattern value</div>
<div class="en " style="left:603px;top:793px;width:150px;height:38px;line-height:40px;text-align:left"></div>
<div class="fr " style="left:437px;top:858px;width:320px;height:73px;border-radius:5px"></div>
<div class="fl" style="left:444px;top:847px;width:118px">Text tools</div>
<div class="bt" style="left:441px;top:877px;width:56px;height:48px;border-radius:4px"><svg width="32" height="32" viewBox="0 0 32 32" fill="#ffffff" stroke="none" style="color:#ffffff"><text x="16" y="28.200" text-anchor="middle" font-family="Liberation Serif,DejaVu Serif,serif" font-weight="bold" font-size="36.500">A</text></svg></div>
<div class="bt" style="left:499px;top:877px;width:56px;height:48px;border-radius:4px"><svg width="32" height="32" viewBox="0 0 32 32" fill="#ffffff" stroke="none" style="color:#ffffff"><polygon points="16.00,3.00 19.59,11.36 28.65,12.19 21.80,18.19 23.82,27.06 16.00,22.40 8.18,27.06 10.20,18.19 3.35,12.19 12.41,11.36" stroke="currentColor" stroke-width="1" stroke-linejoin="round"/></svg></div>
<div class="bt" style="left:557px;top:877px;width:56px;height:48px;border-radius:4px"><svg width="32" height="32" viewBox="0 0 32 32" fill="#ffffff" stroke="none" style="color:#ffffff"><path fill-rule="evenodd" d="M16.00 3.00 L19.59 11.36 L28.65 12.19 L21.80 18.19 L23.82 27.06 L16.00 22.40 L8.18 27.06 L10.20 18.19 L3.35 12.19 L12.41 11.36Z M16.00 7.20 L18.47 13.00 L24.75 13.56 L19.99 17.70 L21.41 23.84 L16.00 20.60 L10.59 23.84 L12.01 17.70 L7.25 13.56 L13.53 13.00Z" stroke="currentColor" stroke-width="1" stroke-linejoin="round"/><clipPath id="cl1"><rect x="0" y="0" width="16" height="32"/></clipPath><polygon clip-path="url(#cl1)" points="16.00,3.00 19.59,11.36 28.65,12.19 21.80,18.19 23.82,27.06 16.00,22.40 8.18,27.06 10.20,18.19 3.35,12.19 12.41,11.36"/></svg></div>
<div class="bt" style="left:615px;top:877px;width:56px;height:48px;border-radius:4px"><svg width="32" height="32" viewBox="0 0 32 32" fill="#ffffff" stroke="none" style="color:#ffffff"><path fill-rule="evenodd" d="M16.00 3.00 L19.59 11.36 L28.65 12.19 L21.80 18.19 L23.82 27.06 L16.00 22.40 L8.18 27.06 L10.20 18.19 L3.35 12.19 L12.41 11.36Z M16.00 7.20 L18.47 13.00 L24.75 13.56 L19.99 17.70 L21.41 23.84 L16.00 20.60 L10.59 23.84 L12.01 17.70 L7.25 13.56 L13.53 13.00Z" stroke="currentColor" stroke-width="1" stroke-linejoin="round"/><clipPath id="cl2"><rect x="16" y="0" width="16" height="32"/></clipPath><polygon clip-path="url(#cl2)" points="16.00,3.00 19.59,11.36 28.65,12.19 21.80,18.19 23.82,27.06 16.00,22.40 8.18,27.06 10.20,18.19 3.35,12.19 12.41,11.36"/></svg></div>
<div id="ta"><pre>========================================================================================================================
|    At x   |
========================================================================================================================
| parameter |   y   | unknown |   -1.0  |  -0.95  |   -0.9  |  -0.85  |   -0.8  |  -0.75  |   -0.7  | -0.65  |
========================================================================================================================
|   units   |   -   | unknown | unknown | unknown | unknown | unknown | unknown | unknown | unknown |
------------------------------------------------------------------------------------------------------------------------
|   names   | index |    x    |   F(0)  |   F(1)  |   F(2)  |   F(3)  |   F(4)  |   F(5)  |   F(6)  |
------------------------------------------------------------------------------------------------------------------------
|   value   |   0   | -0.5000 |  -0.00  |  -0.00  |  -0.00  |  -0.00  |  -0.00  |  -0.00  |  -0.00  |
------------------------------------------------------------------------------------------------------------------------
|   value   |   1   |  0.3000 |  -0.59  |  -0.58  |  -0.56  |  -0.52  |  -0.48  |  -0.42  |  -0.35  |
========================================================================================================================
|  Summary  |
========================================================================================================================</pre></div>
<div id="hs"><div id="hth"></div></div>
<svg class="abs" style="left:950px;top:727px" width="18" height="30" viewBox="0 0 18 30"><path fill="#fff" d="M1 1h6.500l1.500 .800 1.500-.800H17v5h-6v18h6v4.500h-6.500l-1.500-.800-1.500 .800H1V24h6V6H1z"/><path fill="#000" d="M2.300 2.600h4.700l2 1 2-1h4.700v1.800H10v21.200h5.700v1.700H11l-2-1-2 1H2.300v-1.700H8V4.400H2.300z"/></svg>
<div class="fr " style="left:4px;top:965px;width:1914px;height:66px;border-radius:5px"></div>
<div class="fl" style="left:11px;top:954px;width:70px">Export</div>
<div class="tx t20" style="left:12px;top:991px;">directory</div>
<div class="en pl" style="left:125px;top:985px;width:651px;height:38px;line-height:40px;text-align:left">C:/tclsoft/tkfab/csv</div>
<div class="tx t20" style="left:791px;top:991px;">reset name</div>
<div class="bt" style="left:917px;top:986px;width:46px;height:38px;border-radius:4px"><svg width="26" height="26" viewBox="0 0 32 32" fill="#ffffff" stroke="none" style="color:#ffffff"><path d="M6 10.200L10.200 6 16 11.800 21.800 6 26 10.200 20.200 16 26 21.800 21.800 26 16 20.200 10.200 26 6 21.800 11.800 16z"/></svg></div>
<div class="tx t20" style="left:969px;top:991px;">name</div>
<div class="en " style="left:1023px;top:985px;width:658px;height:38px;line-height:40px;text-align:center">export_meas0_main</div>
<div class="tx t20" style="left:1689px;top:991px;">extension</div>
<div class="en " style="left:1803px;top:985px;width:110px;height:38px;line-height:40px;text-align:center">txt</div>
<div class="bt" style="left:8px;top:1039px;width:56px;height:48px;border-radius:4px"><svg width="32" height="32" viewBox="0 0 32 32" fill="#e0e0e0" stroke="none" style="color:#e0e0e0"><path d="M5 3.500L28 16 5 28.500z"/><rect x="0" y="0" width="32" height="32" fill="url(#stp)" shape-rendering="crispEdges"/></svg></div>
<div id="st" style="left:66px;top:1040px;width:1229px;height:43px">....</div>
<div class="bt" style="left:1301px;top:1039px;width:56px;height:48px;border-radius:4px"><svg width="32" height="32" viewBox="0 0 32 32" fill="#00c000" stroke="none" style="color:#00c000"><defs><radialGradient id="lg1" cx="0.5" cy="0.85" r="0.75"><stop offset="0" stop-color="#7dff4a"/><stop offset="0.45" stop-color="#22b400"/><stop offset="1" stop-color="#0c7a00"/></radialGradient><linearGradient id="lg2" x1="0" y1="0" x2="0" y2="1"><stop offset="0" stop-color="#fff" stop-opacity="1"/><stop offset="0.35" stop-color="#fff" stop-opacity=".85"/><stop offset="1" stop-color="#fff" stop-opacity="0"/></linearGradient></defs><circle cx="16" cy="16" r="13.400" fill="url(#lg1)" stroke="#0a3a38" stroke-width="1.300"/><ellipse cx="16" cy="9.800" rx="9.200" ry="6.600" fill="url(#lg2)"/></svg></div>
<div class="tx t20" style="left:1363px;top:1049px;">17 Feb 2026</div>
<div class="tx t20" style="left:1503px;top:1049px;">13:15:24</div>
<div class="bt" style="left:1605px;top:1039px;width:56px;height:48px;border-radius:4px"><svg width="32" height="32" viewBox="0 0 32 32" fill="#ffffff" stroke="none" style="color:#ffffff"><path fill-rule="evenodd" d="M11 2h10l2.200 3.700h5.300A2.500 2.500 0 0 1 31 8.200v17.200a2.500 2.500 0 0 1-2.500 2.500h-25A2.500 2.500 0 0 1 1 25.400V8.200a2.500 2.500 0 0 1 2.500-2.500h5.300zM16 9.600a7.200 7.200 0 1 0 0 14.400a7.200 7.200 0 1 0 0-14.400zM16 12.200a4.600 4.600 0 1 1 0 9.200a4.600 4.600 0 1 1 0-9.200z"/><rect x="0" y="0" width="32" height="32" fill="url(#stp)" shape-rendering="crispEdges"/></svg></div>
<div class="bt" style="left:1665px;top:1039px;width:56px;height:48px;border-radius:4px"><svg width="32" height="32" viewBox="0 0 32 32" fill="#ffffff" stroke="none" style="color:#ffffff"><path fill-rule="evenodd" d="M10.200 8.300V6a2 2 0 0 1 2-2h7.600a2 2 0 0 1 2 2v2.300h2.900v19.600H7.300V8.300zM12.200 8.300h7.600V6.400a.4.400 0 0 0-.4-.4h-6.800a.4.400 0 0 0-.4.400zM6.100 8.300v19.600H4.500A2.500 2.500 0 0 1 2 25.400V10.800a2.500 2.500 0 0 1 2.500-2.500zM25.900 8.300h1.600a2.500 2.500 0 0 1 2.500 2.500v14.600a2.500 2.500 0 0 1-2.500 2.500h-1.600z"/></svg></div>
<div class="bt" style="left:1725px;top:1039px;width:56px;height:48px;border-radius:4px"><svg width="32" height="32" viewBox="0 0 32 32" fill="#ffffff" stroke="none" style="color:#ffffff"><path d="M16 2.900L24.400 12H19v9.400h-6V12H7.600z"/><path fill-rule="evenodd" d="M4.200 20h7.200v3h9.200v-3h7.300a1.200 1.200 0 0 1 1.200 1.200v5.600a1.200 1.200 0 0 1-1.200 1.200H4.200A1.200 1.200 0 0 1 3 26.800v-5.600A1.200 1.200 0 0 1 4.200 20zM22.200 23.700a1.100 1.100 0 1 0 0 2.200a1.100 1.100 0 1 0 0-2.200zM26.100 23.700a1.100 1.100 0 1 0 0 2.200a1.100 1.100 0 1 0 0-2.200z"/><rect x="0" y="0" width="32" height="32" fill="url(#stp)" shape-rendering="crispEdges"/></svg></div>
<div class="bt" style="left:1785px;top:1039px;width:56px;height:48px;border-radius:4px"><svg width="32" height="32" viewBox="0 0 32 32" fill="#ffffff" stroke="none" style="color:#ffffff"><path d="M13.100 2.100h5.900V12h5.900L16 20.600 7.300 12h5.800z"/><path fill-rule="evenodd" d="M4.200 18.100h6.400l5.400 5.300 5.400-5.300h6.500a1.200 1.200 0 0 1 1.200 1.200v5.600a1.200 1.200 0 0 1-1.200 1.200H4.200A1.200 1.200 0 0 1 3 24.900v-5.600a1.200 1.200 0 0 1 1.200-1.200zM22.200 21.800a1.100 1.100 0 1 0 0 2.200a1.100 1.100 0 1 0 0-2.200zM25.900 21.800a1.100 1.100 0 1 0 0 2.200a1.100 1.100 0 1 0 0-2.200z"/><rect x="0" y="0" width="32" height="32" fill="url(#stp)" shape-rendering="crispEdges"/></svg></div>
<div class="bt" style="left:1845px;top:1039px;width:56px;height:48px;border-radius:4px"><svg width="32" height="32" viewBox="0 0 32 32" fill="#ffffff" stroke="none" style="color:#ffffff"><path d="M10 6.100h12a9.900 9.900 0 0 1 0 19.800H10a9.900 9.900 0 0 1 0-19.800z"/><circle cx="22.200" cy="16" r="8" fill="#747474"/></svg></div>
<svg class="abs" style="left:1902px;top:1070px" width="18" height="18" viewBox="0 0 18 18" fill="#7c7c7c"><circle cx="13.800" cy="4" r="2"/><circle cx="8.300" cy="9.500" r="2"/><circle cx="13.800" cy="9.500" r="2"/><circle cx="2.800" cy="15" r="2"/><circle cx="8.300" cy="15" r="2"/><circle cx="13.800" cy="15" r="2"/></svg>
</body></html>
